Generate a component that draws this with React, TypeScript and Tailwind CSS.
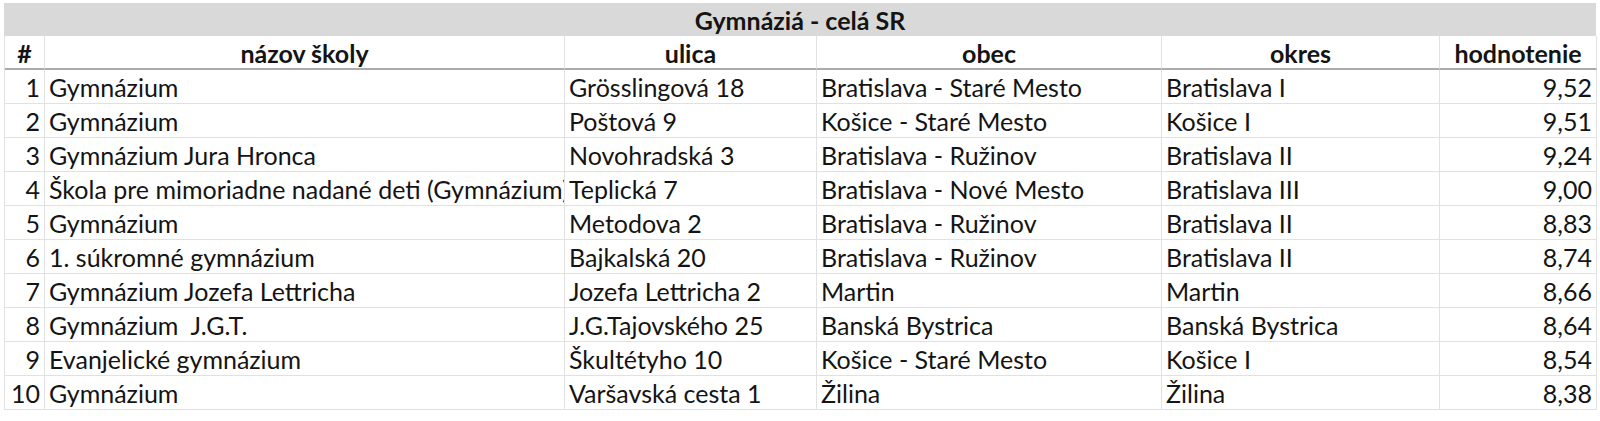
import React from 'react';

const rows = [
  { n: 1, name: 'Gymnázium', street: 'Grösslingová 18', town: 'Bratislava - Staré Mesto', district: 'Bratislava I', score: '9,52' },
  { n: 2, name: 'Gymnázium', street: 'Poštová 9', town: 'Košice - Staré Mesto', district: 'Košice I', score: '9,51' },
  { n: 3, name: 'Gymnázium Jura Hronca', street: 'Novohradská 3', town: 'Bratislava - Ružinov', district: 'Bratislava II', score: '9,24' },
  { n: 4, name: 'Škola pre mimoriadne nadané deti (Gymnázium)', street: 'Teplická 7', town: 'Bratislava - Nové Mesto', district: 'Bratislava III', score: '9,00' },
  { n: 5, name: 'Gymnázium', street: 'Metodova 2', town: 'Bratislava - Ružinov', district: 'Bratislava II', score: '8,83' },
  { n: 6, name: '1. súkromné gymnázium', street: 'Bajkalská 20', town: 'Bratislava - Ružinov', district: 'Bratislava II', score: '8,74' },
  { n: 7, name: 'Gymnázium Jozefa Lettricha', street: 'Jozefa Lettricha 2', town: 'Martin', district: 'Martin', score: '8,66' },
  { n: 8, name: 'Gymnázium  J.G.T.', street: 'J.G.Tajovského 25', town: 'Banská Bystrica', district: 'Banská Bystrica', score: '8,64' },
  { n: 9, name: 'Evanjelické gymnázium', street: 'Škultétyho 10', town: 'Košice - Staré Mesto', district: 'Košice I', score: '8,54' },
  { n: 10, name: 'Gymnázium', street: 'Varšavská cesta 1', town: 'Žilina', district: 'Žilina', score: '8,38' },
];

// excel-like cells, text sits a bit low like the sheet
const cell = 'h-[34px] flex items-center pt-[2px] px-[4px] border-r border-b border-[#e1e1e1] overflow-hidden whitespace-pre';
const head = 'h-[34px] flex items-center justify-center pt-[2px] px-[4px] border-r border-b-2 border-[#e1e1e1] border-b-[#ababab] font-bold whitespace-nowrap';

const App = () => {
  return (
    <div className="w-[1600px] h-[421px] bg-white pt-[3px] pl-[4px] text-[25px] leading-none text-[#141414] font-['Lato',sans-serif]">
      <div className="w-[1592px]">
        <div className="h-[33px] bg-[#d9d9d9] flex items-center justify-center pt-[2px] font-bold">Gymnáziá - celá SR</div>
        <div className="grid grid-cols-[40px_520px_252px_345px_278px_157px] border-l border-[#e1e1e1]">
          <div className={head}>#</div>
          <div className={head}>názov školy</div>
          <div className={head}>ulica</div>
          <div className={head}>obec</div>
          <div className={head}>okres</div>
          <div className={head}>hodnotenie</div>
          {rows.map((r) => (
            <React.Fragment key={r.n}>
              <div className={`${cell} justify-end`}>{r.n}</div>
              <div className={cell}>{r.name}</div>
              <div className={cell}>{r.street}</div>
              <div className={cell}>{r.town}</div>
              <div className={cell}>{r.district}</div>
              <div className={`${cell} justify-end`}>{r.score}</div>
            </React.Fragment>
          ))}
        </div>
      </div>
    </div>
  );
};

export default App;
